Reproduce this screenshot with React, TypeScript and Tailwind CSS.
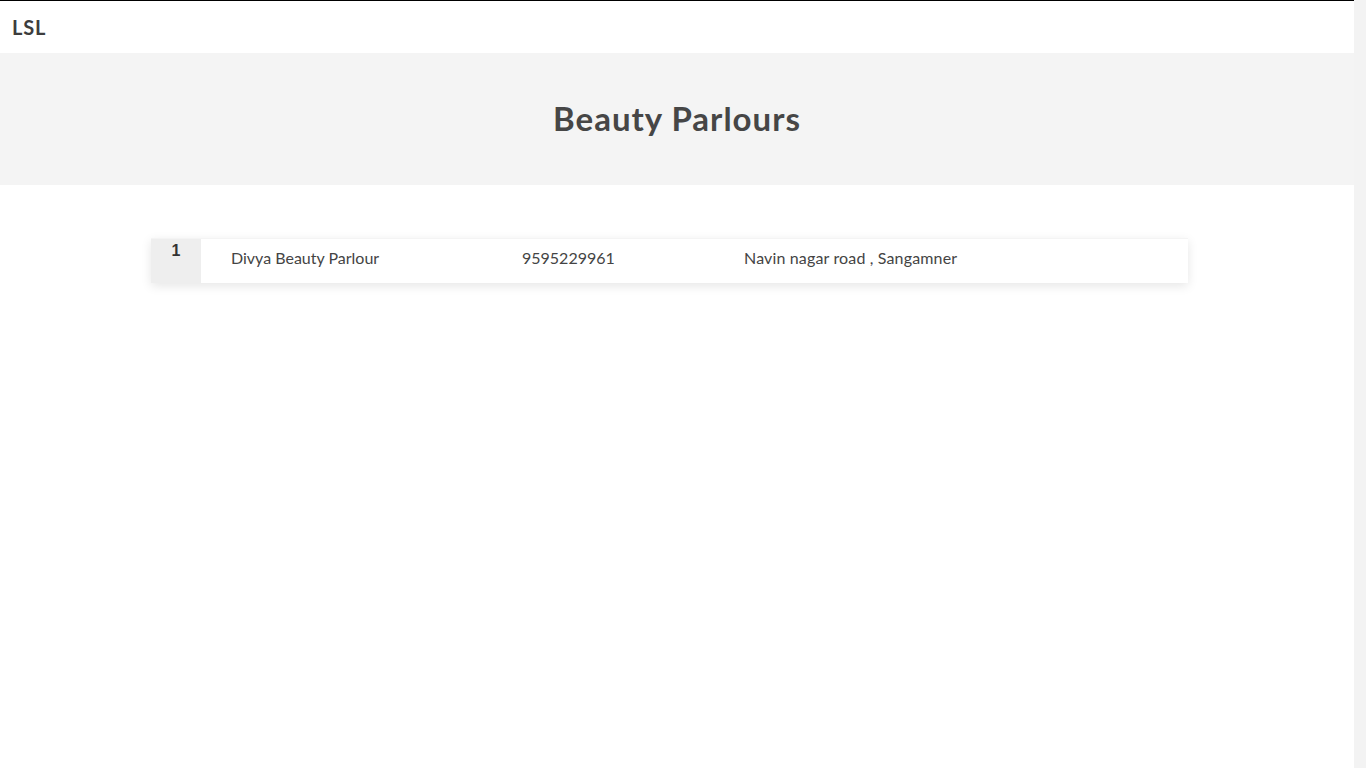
import React from "react";

interface Parlour {
    id: number;
    name: string;
    phone: string;
    address: string;
}

const parlours: Parlour[] = [
    { id: 1, name: "Divya Beauty Parlour", phone: "9595229961", address: "Navin nagar road , Sangamner" },
];

export default function App() {
    return (
        <div className="flex h-[768px] w-[1366px] overflow-hidden bg-white font-['Lato',sans-serif] text-[#444]">
            <div className="flex w-[1354px] flex-col">
                {/* top bar */}
                <header className="flex h-[53px] items-center border-t border-black px-3">
                    <span className="text-[20px] font-bold tracking-[0.8px] text-[#3d3d3d]">LSL</span>
                </header>

                {/* title banner */}
                <section className="flex h-[132px] items-center justify-center bg-[#f4f4f4]">
                    <h1 className="text-[33px] font-bold tracking-[1px] text-[#464646]">Beauty Parlours</h1>
                </section>

                {/* list */}
                <div className="px-[151px] pt-[53px]">
                    <table className="w-[1037px] border-collapse shadow-[0_3px_10px_rgba(0,0,0,0.1)]">
                        <tbody>
                            {parlours.map((p) => (
                                <tr key={p.id} className="h-[44px] border-t border-[#f4f4f4] bg-white">
                                    <th className="w-[50px] bg-[#eeeeee] pt-0 align-top font-['Liberation_Sans',sans-serif] text-[16px] leading-6 font-bold text-[#333]">
                                        {p.id}
                                    </th>
                                    <td className="w-[291px] pb-[6px] pl-[30px] text-[16px] text-[#444]">{p.name}</td>
                                    <td className="w-[222px] pb-[6px] pl-[30px] text-[16px] text-[#444]">{p.phone}</td>
                                    <td className="pb-[6px] pl-[30px] text-[16px] tracking-[0.15px] text-[#444]">{p.address}</td>
                                </tr>
                            ))}
                        </tbody>
                    </table>
                </div>
            </div>
            {/* scrollbar track */}
            <div className="w-[12px] bg-[#f3f3f3]" />
        </div>
    );
}
